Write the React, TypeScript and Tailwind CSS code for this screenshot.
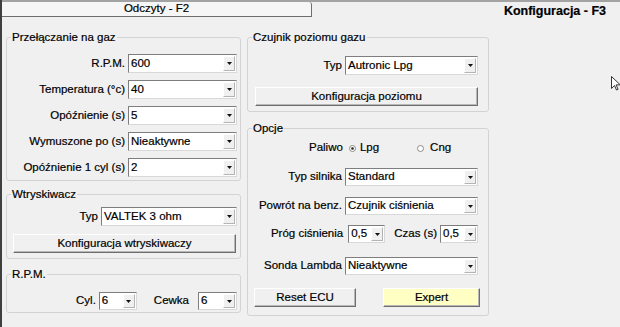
import React from 'react';

function Arrow() {
  return (
    <svg width="5" height="3" viewBox="0 0 5 3">
      <path d="M0 0h5L2.5 3z" fill="#111" />
    </svg>
  );
}

function Combo({ value, className }: { value: string; className: string }) {
  return (
    <div
      className={`flex shrink-0 bg-white border border-t-[#7e7e7e] border-l-[#7e7e7e] border-r-[#d8d8d8] border-b-[#d8d8d8] ${className}`}
    >
      <span className="flex-1 pl-[2px] flex items-center whitespace-nowrap overflow-hidden">{value}</span>
      <span className="w-[12px] my-[1px] mr-[1px] bg-[#f0f0f0] border border-t-white border-l-white border-r-[#b4b4b4] border-b-[#b4b4b4] flex items-center justify-center">
        <Arrow />
      </span>
    </div>
  );
}

function Btn({ label, className }: { label: string; className: string }) {
  return (
    <div
      className={`flex items-center justify-center border border-t-white border-l-white border-r-[#6e6e6e] border-b-[#6e6e6e] shadow-[inset_-1px_-1px_0_#b8b8b8] ${className}`}
    >
      {label}
    </div>
  );
}

function Group({ title, children, className }: { title: string; children: React.ReactNode; className: string }) {
  return (
    <fieldset className={`border border-[#d3d3d3] rounded-[3px] ${className}`}>
      <legend className="ml-[4px] px-[1px] leading-[14px]">{title}</legend>
      {children}
    </fieldset>
  );
}

function Row({ label, children, className }: { label: string; children: React.ReactNode; className?: string }) {
  return (
    <div className={`flex items-center justify-end gap-[3px] ${className ?? ''}`}>
      <span className="whitespace-nowrap">{label}</span>
      {children}
    </div>
  );
}

function Radio({ checked }: { checked: boolean }) {
  return (
    <svg width="7" height="7" viewBox="0 0 7 7">
      <circle cx="3.5" cy="3.5" r="3" fill="white" stroke="#8a8a8a" strokeWidth="1" />
      {checked && <circle cx="3.5" cy="3.5" r="1.3" fill="#222" />}
    </svg>
  );
}

export default function App() {
  return (
    <div
      className="relative w-[620px] h-[327px] overflow-hidden bg-[#f0f0f0] border-l-[2px] border-[#3f3f3f] text-[11.5px] text-black [-webkit-text-stroke:0.2px_#000]"
      style={{ fontFamily: '"Liberation Sans", Arial, sans-serif' }}
    >
      {/* Tabs */}
      <div className="flex h-[17px] border-t-[2px] border-[#a3a3a3]">
        <div className="w-[310px] h-[15px] bg-[#f6f6f6] border-r border-b border-[#6f6f6f] rounded-tr-[3px] flex items-center justify-center">
          Odczyty - F2
        </div>
        <div className="flex-1 flex justify-end items-end pr-[14px] font-bold text-[12.5px] leading-[14px] -mb-[1px]">
          Konfiguracja - F3
        </div>
      </div>

      <div className="flex gap-[6px] pl-[4px] pt-[13px]">
        {/* Left column */}
        <div className="w-[235px] flex flex-col">
          <Group title="Przełączanie na gaz" className="">
            <div className="flex flex-col gap-[7px] pt-[10px] pb-[3px] pr-[3px]">
              <Row label="R.P.M.">
                <Combo value="600" className="w-[109px] h-[19px]" />
              </Row>
              <Row label="Temperatura (°c)">
                <Combo value="40" className="w-[109px] h-[19px]" />
              </Row>
              <Row label="Opóźnienie (s)">
                <Combo value="5" className="w-[109px] h-[19px]" />
              </Row>
              <Row label="Wymuszone po (s)">
                <Combo value="Nieaktywne" className="w-[109px] h-[19px]" />
              </Row>
              <Row label="Opóźnienie 1 cyl (s)">
                <Combo value="2" className="w-[109px] h-[19px]" />
              </Row>
            </div>
          </Group>

          <Group title="Wtryskiwacz" className="mt-[6px]">
            <div className="flex flex-col pt-[6px] pb-[5px] pl-[6px] pr-[3px]">
              <Row label="Typ">
                <Combo value="VALTEK 3 ohm" className="w-[136px] h-[19px]" />
              </Row>
              <Btn label="Konfiguracja wtryskiwaczy" className="mt-[8px] h-[19px] mr-[1px]" />
            </div>
          </Group>

          <Group title="R.P.M." className="mt-[8px]">
            <div className="flex items-center justify-end pt-[11px] pb-[2px] pr-[3px]">
              <span className="mr-[3px]">Cyl.</span>
              <Combo value="6" className="w-[38px] h-[18px]" />
              <span className="ml-[17px] mr-[9px]">Cewka</span>
              <Combo value="6" className="w-[39px] h-[18px]" />
            </div>
          </Group>
        </div>

        {/* Right column */}
        <div className="w-[242px] flex flex-col">
          <Group title="Czujnik poziomu gazu" className="">
            <div className="flex flex-col pt-[12px] pb-[5px] pl-[7px] pr-[10px]">
              <Row label="Typ">
                <Combo value="Autronic Lpg" className="w-[133px] h-[19px]" />
              </Row>
              <Btn label="Konfiguracja poziomu" className="mt-[12px] h-[19px]" />
            </div>
          </Group>

          <Group title="Opcje" className="mt-[9px]">
            <div className="flex flex-col pt-[6px] pb-[8px] pl-[5px] pr-[10px]">
              <div className="flex items-center h-[14px] pl-[56px]">
                <span className="mr-[6px]">Paliwo</span>
                <Radio checked />
                <span className="ml-[4px]">Lpg</span>
                <span className="ml-[38px]">
                  <Radio checked={false} />
                </span>
                <span className="ml-[6px]">Cng</span>
              </div>
              <Row label="Typ silnika" className="mt-[13px]">
                <Combo value="Standard" className="w-[133px] h-[18px]" />
              </Row>
              <Row label="Powrót na benz." className="mt-[11px]">
                <Combo value="Czujnik ciśnienia" className="w-[133px] h-[18px]" />
              </Row>
              <div className="flex items-center justify-end mt-[10px]">
                <span className="mr-[5px]">Próg ciśnienia</span>
                <Combo value="0,5" className="w-[37px] h-[18px]" />
                <span className="ml-[9px] mr-[3px]">Czas (s)</span>
                <Combo value="0,5" className="w-[38px] h-[18px]" />
              </div>
              <Row label="Sonda Lambda" className="mt-[14px]">
                <Combo value="Nieaktywne" className="w-[133px] h-[18px]" />
              </Row>
              <div className="flex items-center mt-[13px]">
                <Btn label="Reset ECU" className="w-[102px] h-[19px] ml-[1px]" />
                <Btn label="Expert" className="w-[97px] h-[19px] ml-[27px] -mr-[2px] bg-[#ffffc4]" />
              </div>
            </div>
          </Group>
        </div>
      </div>

      {/* mouse pointer */}
      <svg className="absolute left-[609px] top-[76px]" width="10" height="15" viewBox="0 0 10 15">
        <path d="M0.5 0.5v12l3-3 2 4.5 1.6-.7-2-4.4h4.2z" fill="white" stroke="#333" strokeWidth="1" strokeLinejoin="round" />
      </svg>
    </div>
  );
}
